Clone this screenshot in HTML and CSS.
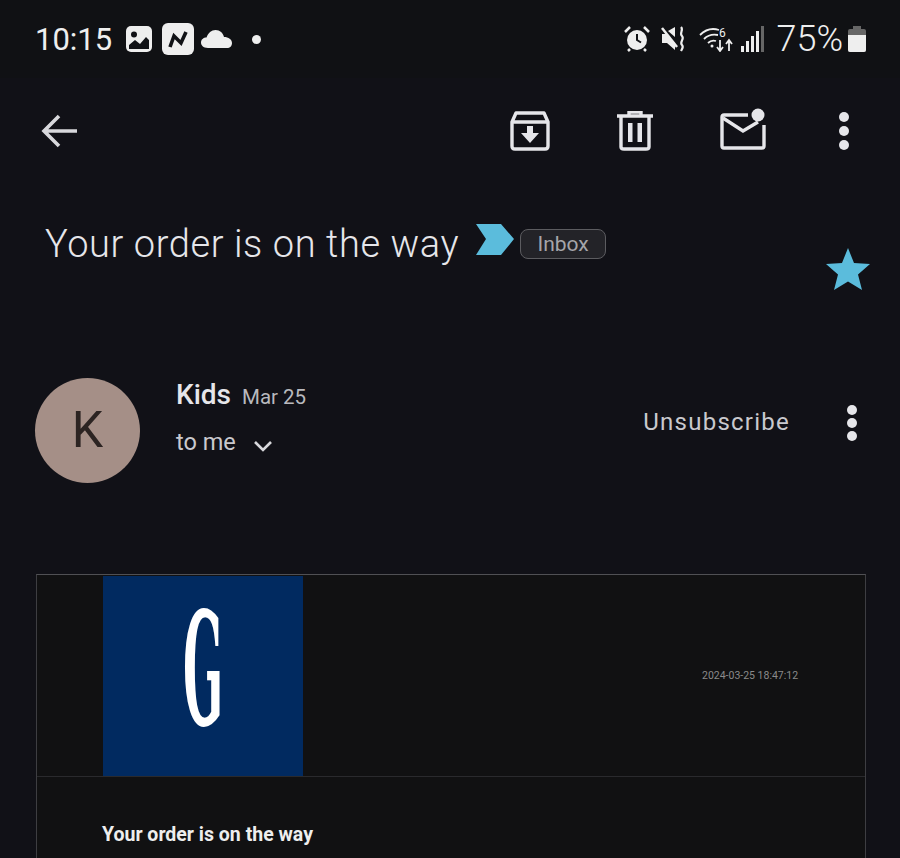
FILE: index.html
```html
<!DOCTYPE html>
<html>
<head>
    <title>Your order is on the way</title>
    <meta name="viewport" content="width=device-width, initial-scale=1.0">
    <link rel="stylesheet" href="styles.css">
</head>
<body>
    <div class="status-bar">
        <span class="time">10:15</span>
        <svg class="status-icon icon-photo" width="26" height="26" viewBox="0 0 26 26">
            <rect width="26" height="26" rx="5" fill="#eee"/>
            <circle cx="8" cy="8.5" r="3" fill="#111216"/>
            <path d="M3 23 V19 L9 14 L14 18 L20 11 L23 14 V23 Z" fill="#111216"/>
        </svg>
        <svg class="status-icon icon-tile" width="32" height="32" viewBox="0 0 32 32">
            <rect width="32" height="32" rx="6" fill="#eee"/>
            <path d="M8 24 L12 13 L19 20 L24 9" fill="none" stroke="#111216" stroke-width="3.600"/>
        </svg>
        <svg class="status-icon icon-cloud" width="31" height="18" viewBox="0 0 31 18">
            <path d="M7 18 C2 18 0 15 0 12.500 C0 9.500 2.500 7.500 5.500 7.500 C7 3 10.500 0 14.500 0 C19 0 22 3 23 7 C27.500 7 31 9.500 31 13 C31 16 29 18 26 18 Z" fill="#eee"/>
        </svg>
        <span class="dot"></span>

        <div class="status-right">
            <svg width="26" height="26" viewBox="0 0 26 26">
                <circle cx="13" cy="14" r="10" fill="#eee"/>
                <path d="M13 8 V14 L17 16.500" fill="none" stroke="#111216" stroke-width="2"/>
                <path d="M1 6 L6 1 M25 6 L20 1 M6 23 L4 25 M20 23 L22 25" stroke="#eee" stroke-width="2.500"/>
            </svg>
            <svg class="icon-mute" width="26" height="26" viewBox="0 0 26 26">
                <path d="M5 8 H1 V17 H6 L14 24 V17 Z M7 5 L14 1 V11 Z" fill="#eee"/>
                <path d="M1 2 L16 21" stroke="#eee" stroke-width="2.500"/>
                <path d="M20 1 C23 4 18 7 21 10 C24 13 18 16 21 19 C23 21 21 23 20 25" fill="none" stroke="#eee" stroke-width="2.200"/>
            </svg>
            <svg class="icon-wifi" width="34" height="26" viewBox="0 0 34 26">
                <path d="M1 9 C7 3 14 2 20 4 M5 13 C9 9 14 8 19 9 M9 17 C11 15 14 14 17 15" fill="none" stroke="#eee" stroke-width="1.800"/>
                <circle cx="13" cy="20" r="1.500" fill="#eee"/>
                <text x="20" y="11" class="wifi-six">6</text>
                <path d="M21 14 V24 M18 21 L21 25 L24 21 M30 25 V15 M27 18 L30 14 L33 18" fill="none" stroke="#eee" stroke-width="1.800"/>
            </svg>
            <svg class="icon-signal" width="23" height="26" viewBox="0 0 23 26">
                <rect x="0" y="20" width="3" height="6" fill="#eee"/>
                <rect x="5" y="15" width="3" height="11" fill="#eee"/>
                <rect x="10" y="10" width="3" height="16" fill="#eee"/>
                <rect x="15" y="5" width="3" height="21" fill="#eee"/>
                <rect x="20" y="0" width="3" height="26" fill="#666"/>
            </svg>
            <span class="battery-text">75%</span>
            <svg class="icon-battery" width="18" height="26" viewBox="0 0 18 26">
                <path d="M5 0 H13 V3 H16 Q18 3 18 5 V24 Q18 26 16 26 H2 Q0 26 0 24 V5 Q0 3 2 3 H5 Z" fill="#666"/>
                <path d="M0 9 H18 V24 Q18 26 16 26 H2 Q0 26 0 24 Z" fill="#eee"/>
            </svg>
        </div>
    </div>

    <div class="toolbar">
        <svg width="38" height="34" viewBox="0 0 38 34">
            <path d="M36 17 H3 M18 2 L3 17 L18 32" fill="none" stroke="#d8d8dc" stroke-width="3.600"/>
        </svg>
        <div class="toolbar-actions">
            <svg width="40" height="40" viewBox="0 0 40 40">
                <path d="M2 11 L6 2 H34 L38 11 V35 Q38 38 35 38 H5 Q2 38 2 35 Z M2 11 H38" fill="none" stroke="#e6e6ea" stroke-width="3.400" stroke-linejoin="round"/>
                <path d="M17 15 H23 V22 H29 L20 32 L11 22 H17 Z" fill="#e6e6ea"/>
            </svg>
            <svg width="38" height="40" viewBox="0 0 38 40">
                <path d="M1 5 H37 M13 4 V1 H25 V4" fill="none" stroke="#e6e6ea" stroke-width="3.400"/>
                <path d="M5 5 V36 Q5 38 8 38 H30 Q33 38 33 36 V5" fill="none" stroke="#e6e6ea" stroke-width="3.400"/>
                <rect x="12" y="12" width="4.500" height="19" fill="#e6e6ea"/>
                <rect x="21.500" y="12" width="4.500" height="19" fill="#e6e6ea"/>
            </svg>
            <svg class="icon-unread" width="46" height="42" viewBox="0 0 46 42">
                <path d="M28 7 H4 Q2 7 2 9 V38 Q2 40 4 40 H42 Q44 40 44 38 V17" fill="none" stroke="#e6e6ea" stroke-width="3.400"/>
                <path d="M3 10 L23 23 L38 14" fill="none" stroke="#e6e6ea" stroke-width="3.400"/>
                <circle cx="38" cy="7" r="6.500" fill="#e6e6ea"/>
            </svg>
            <div class="dots dots-toolbar">
                <span></span><span></span><span></span>
            </div>
        </div>
    </div>

    <div class="subject-row">
        <h1 class="subject">Your order is on the way</h1>
        <svg class="marker" width="38" height="32" viewBox="0 0 38 32">
            <path d="M0 0 H25 L38 15 L25 31 H0 L10 15 Z" fill="#5bbcdc"/>
        </svg>
        <span class="chip">Inbox</span>
        <svg class="star" width="44" height="42" viewBox="0 0 44 42">
            <path d="M22 0 L28 15 L44 16 L32 26.500 L36 42 L22 33.500 L8 42 L12 26.500 L0 16 L16 15 Z" fill="#5bbcdc"/>
        </svg>
    </div>

    <div class="sender-row">
        <div class="avatar">K</div>
        <div class="sender-info">
            <div class="sender-line">
                <span class="sender-name">Kids</span>
                <span class="sender-date">Mar 25</span>
            </div>
            <div class="to-line">
                <span>to me</span>
                <svg width="18" height="11" viewBox="0 0 18 11">
                    <path d="M1 1 L9 9 L17 1" fill="none" stroke="#d8d8dc" stroke-width="2.600"/>
                </svg>
            </div>
        </div>
        <span class="unsubscribe">Unsubscribe</span>
        <div class="dots dots-small">
            <span></span><span></span><span></span>
        </div>
    </div>

    <div class="mail-card">
        <div class="mail-header">
            <div class="logo"><span class="logo-letter">G</span></div>
            <span class="timestamp">2024-03-25 18:47:12</span>
        </div>
        <div class="mail-body">
            <p class="mail-title">Your order is on the way</p>
        </div>
    </div>
</body>
</html>
```

FILE: styles.css
```css
html, body {
    height: 858px;
    overflow: hidden;
}

body {
    margin: 0;
    background-color: #111117;
    font-family: Roboto, "Noto Sans", sans-serif;
    color: #e6e6ea;
}

svg {
    display: block;
    flex-shrink: 0;
}

.status-bar {
    display: flex;
    align-items: center;
    height: 78px;
    padding: 0 34px 0 35px;
    background-color: #101114;
}

.time {
    font-size: 31px;
    font-weight: 400;
    color: #eee;
    margin-right: 14px;
}

.icon-tile {
    margin-left: 10px;
}

.icon-cloud {
    margin-left: 7px;
}

.dot {
    width: 9px;
    height: 9px;
    border-radius: 50%;
    background-color: #eee;
    margin-left: 20px;
}

.status-right {
    display: flex;
    align-items: center;
    margin-left: auto;
}

.icon-mute {
    margin-left: 11px;
}

.icon-wifi {
    margin-left: 12px;
}

.wifi-six {
    font-family: Roboto, sans-serif;
    font-size: 12px;
    fill: #eee;
}

.icon-signal {
    margin-left: 8px;
}

.battery-text {
    font-size: 36px;
    font-weight: 300;
    color: #eee;
    margin-left: 12px;
}

.icon-battery {
    margin-left: 5px;
}

.toolbar {
    display: flex;
    align-items: center;
    justify-content: space-between;
    height: 106px;
    padding: 0 51px 0 41px;
}

.toolbar-actions {
    display: flex;
    align-items: center;
    gap: 66px;
}

.dots-toolbar {
    margin-left: 7px;
}

.icon-unread {
    position: relative;
    top: -2px;
}

.dots {
    display: flex;
    flex-direction: column;
    gap: 4px;
}

.dots span {
    width: 10px;
    height: 10px;
    border-radius: 50%;
    background-color: #e6e6ea;
}

.subject-row {
    display: flex;
    align-items: flex-start;
    height: 194px;
    padding: 37px 30px 0 45px;
    box-sizing: border-box;
}

.subject {
    margin: 0;
    font-size: 38px;
    font-weight: 300;
    line-height: 46px;
    letter-spacing: 0.6px;
    color: #e6e6ea;
}

.marker {
    margin-left: 17px;
    margin-top: 3px;
}

.chip {
    margin-left: 6px;
    margin-top: 8px;
    width: 84px;
    height: 28px;
    line-height: 28px;
    text-align: center;
    font-size: 21px;
    color: #a5a5aa;
    background-color: #232328;
    border: 1px solid #5c5c60;
    border-radius: 8px;
}

.star {
    margin-left: auto;
    margin-top: 27px;
}

.sender-row {
    display: flex;
    align-items: flex-start;
    height: 196px;
    padding: 0 43px 0 35px;
}

.avatar {
    width: 105px;
    height: 105px;
    line-height: 105px;
    text-align: center;
    border-radius: 50%;
    background-color: #a58f87;
    color: #2c2422;
    font-size: 50px;
    font-weight: 400;
    flex-shrink: 0;
}

.sender-info {
    margin-left: 36px;
}

.sender-line {
    display: flex;
    align-items: baseline;
    gap: 11px;
    height: 32px;
}

.sender-name {
    font-size: 28px;
    font-weight: 500;
    color: #e6e6ea;
}

.sender-date {
    font-size: 20.500px;
    color: #b9b9be;
}

.to-line {
    display: flex;
    align-items: center;
    gap: 18px;
    margin-top: 18px;
    font-size: 23.500px;
    color: #c9c9ce;
}

.to-line svg {
    margin-top: 8px;
}

.unsubscribe {
    margin-left: auto;
    margin-top: 30px;
    font-size: 24px;
    letter-spacing: 1.250px;
    color: #c9c9ce;
}

.dots-small {
    margin-left: 57px;
    margin-top: 27px;
    gap: 3px;
}

.mail-card {
    margin-left: 36px;
    width: 830px;
    height: 400px;
    box-sizing: border-box;
    border: 1px solid #3e3e42;
    border-top-color: #505054;
    background-color: #111112;
}

.mail-header {
    display: flex;
    align-items: center;
    height: 202px;
    padding-left: 66px;
    border-bottom: 1px solid #2a2a2d;
    box-sizing: border-box;
}

.logo {
    display: flex;
    align-items: center;
    justify-content: center;
    width: 200px;
    height: 200px;
    margin-top: 1px;
    background-color: #012a60;
    overflow: hidden;
}

.logo-letter {
    font-family: "DejaVu Serif", serif;
    font-size: 157px;
    font-weight: 700;
    line-height: 1;
    color: #fff;
    transform: scaleX(0.3);
    margin-bottom: 12px;
}

.timestamp {
    margin-left: 399px;
    font-size: 10.500px;
    color: #8a8a8a;
    white-space: nowrap;
}

.mail-body {
    padding: 46px 0 0 65px;
}

.mail-title {
    margin: 0;
    font-size: 19.500px;
    font-weight: 700;
    color: #eee;
}
```
